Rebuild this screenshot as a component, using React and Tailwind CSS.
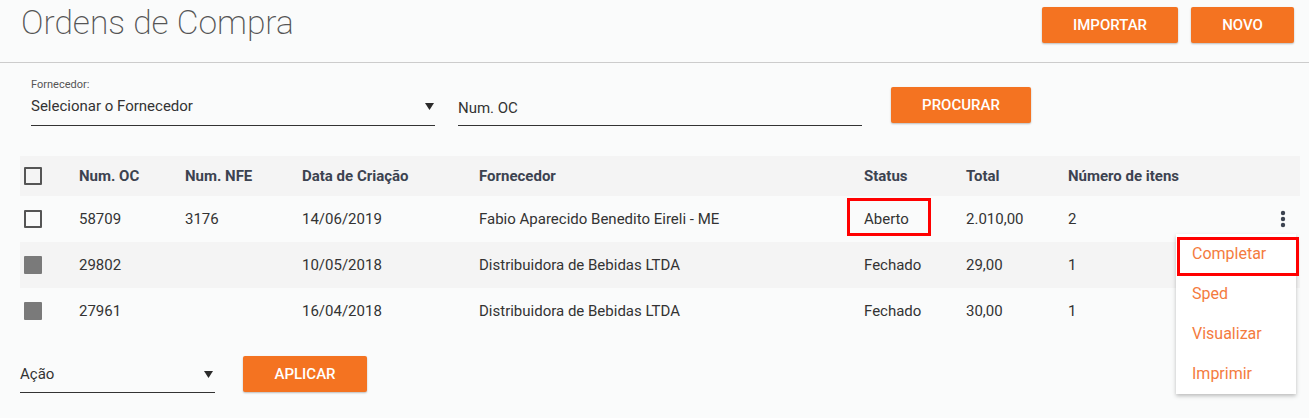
import React from 'react';

const rows = [
  { id: '58709', nfe: '3176', date: '14/06/2019', vendor: 'Fabio Aparecido Benedito Eireli - ME', status: 'Aberto', total: '2.010,00', items: '2', open: true },
  { id: '29802', nfe: '', date: '10/05/2018', vendor: 'Distribuidora de Bebidas LTDA', status: 'Fechado', total: '29,00', items: '1' },
  { id: '27961', nfe: '', date: '16/04/2018', vendor: 'Distribuidora de Bebidas LTDA', status: 'Fechado', total: '30,00', items: '1' },
];

const cols = 'grid grid-cols-[59px_106px_117px_177px_385px_102px_102px_1fr] items-center';

function OrangeBtn({ children, className = '' }) {
  return (
    <button className={`h-[36px] bg-[#f47321] text-white text-[15px] font-medium uppercase rounded-[2px] shadow-[0_1px_2px_rgba(0,0,0,0.25)] ${className}`}>
      {children}
    </button>
  );
}

function Caret() {
  return (
    <svg width="9" height="7" viewBox="0 0 9 7" className="shrink-0">
      <path d="M0 0 H9 L4.5 7 Z" fill="#2b2b2b" />
    </svg>
  );
}

function Check({ disabled }) {
  if (disabled) return <div className="w-[18px] h-[18px] bg-[#7a7a7a] rounded-[1px] ml-[4px]" />;
  return <div className="w-[18px] h-[18px] border-2 border-[#555] rounded-[1px] ml-[4px]" />;
}

function Kebab() {
  return (
    <svg width="6" height="18" viewBox="0 0 6 18">
      <circle cx="3" cy="3" r="2.2" fill="#3c4350" />
      <circle cx="3" cy="9" r="2.2" fill="#3c4350" />
      <circle cx="3" cy="15" r="2.2" fill="#3c4350" />
    </svg>
  );
}

export default function App() {
  return (
    <div className="relative w-[1309px] h-[418px] overflow-hidden bg-[#fafbfb] font-['Roboto',sans-serif] text-[#333]">
      {/* Header */}
      <div className="flex items-start justify-between h-[63px] border-b border-[#cccccc] pl-[21px] pr-[15px]">
        <h1 className="mt-[6px] text-[33.5px] leading-[33px] font-[200] text-[#555]">Ordens de Compra</h1>
        <div className="flex gap-[13px] mt-[7px]">
          <OrangeBtn className="w-[136px]">Importar</OrangeBtn>
          <OrangeBtn className="w-[103px]">Novo</OrangeBtn>
        </div>
      </div>

      {/* Filters */}
      <div className="flex items-end pt-[15px] pl-[31px]">
        <div className="w-[404px]">
          <div className="text-[11px] leading-[13px] text-[#555]">Fornecedor:</div>
          <div className="flex items-center justify-between pt-[5px] pb-[9px] pr-[1px] border-b border-[#333]">
            <span className="text-[15px] leading-[20px]">Selecionar o Fornecedor</span>
            <Caret />
          </div>
        </div>
        <div className="w-[404px] ml-[23px] pt-[9px] pb-[5px] border-b border-[#333]">
          <span className="text-[15px] leading-[20px] text-[#333]">Num. OC</span>
        </div>
        <OrangeBtn className="ml-[29px] mb-[3px] w-[140px]">Procurar</OrangeBtn>
      </div>

      {/* Table */}
      <div className="ml-[20px] mt-[30px] w-[1280px] text-[15px]">
        <div className={`${cols} h-[40px] bg-[#f4f4f4] font-bold text-[#3c4350]`}>
          <div><Check /></div>
          <div>Num. OC</div>
          <div>Num. NFE</div>
          <div>Data de Criação</div>
          <div>Fornecedor</div>
          <div>Status</div>
          <div>Total</div>
          <div>Número de itens</div>
        </div>
        {rows.map((r, i) => (
          <div key={r.id} className={`${cols} h-[46px] ${i % 2 === 1 ? 'bg-[#f4f4f4]' : ''}`}>
            <div><Check disabled={!r.open} /></div>
            <div>{r.id}</div>
            <div>{r.nfe}</div>
            <div>{r.date}</div>
            <div>{r.vendor}</div>
            <div className="relative">
              {r.status}
              {r.open && <div className="absolute left-[-17px] top-[-10px] w-[84px] h-[38px] border-[3px] border-[#ff0000]" />}
            </div>
            <div>{r.total}</div>
            <div className="flex items-center justify-between pr-[14px]">
              <span>{r.items}</span>
              {r.open && <Kebab />}
            </div>
          </div>
        ))}
      </div>

      {/* Bottom action */}
      <div className="flex items-end ml-[20px] mt-[22px]">
        <div className="w-[195px] flex items-center justify-between pt-[8px] pb-[8px] pr-[2px] border-b border-[#333]">
          <span className="text-[15px] leading-[20px]">Ação</span>
          <Caret />
        </div>
        <OrangeBtn className="ml-[28px] mb-[1px] w-[124px]">Aplicar</OrangeBtn>
      </div>

      {/* Context menu */}
      <div className="absolute left-[1176px] top-[234px] w-[120px] bg-white shadow-[0_2px_4px_rgba(0,0,0,0.25)] text-[16px] text-[#f47b3e]">
        {['Completar', 'Sped', 'Visualizar', 'Imprimir'].map((t) => (
          <div key={t} className="h-[40px] flex items-center pl-[16px]">{t}</div>
        ))}
      </div>
      <div className="absolute left-[1177px] top-[237px] w-[122px] h-[39px] border-[3px] border-[#ff0000]" />
    </div>
  );
}
